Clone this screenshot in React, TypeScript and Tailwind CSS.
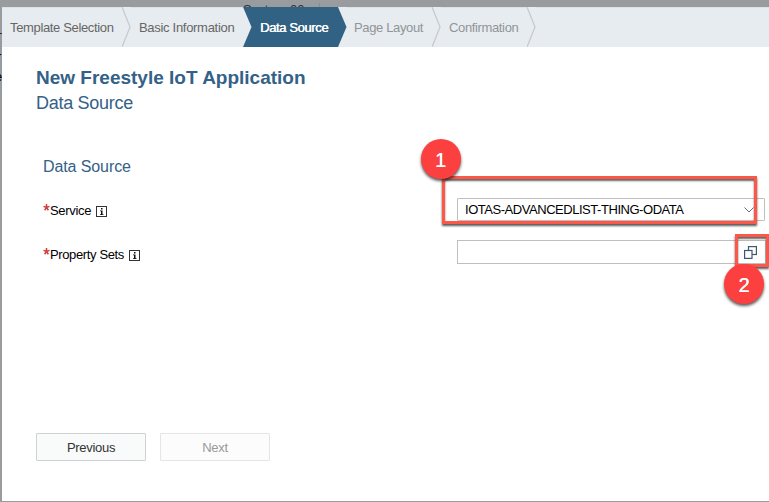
import type { ReactNode } from "react";

function Chevron({ left, right, line }: { left: string; right: string; line?: boolean }) {
  return (
    <svg width="9" height="40" viewBox="0 0 9 40" className="shrink-0">
      <rect width="9" height="40" fill={right} />
      <path d="M0 0L8.5 20L0 40Z" fill={left} />
      {line && <path d="M0 0L8 20L0 40" fill="none" stroke="#c6cbd0" strokeWidth="1.3" />}
    </svg>
  );
}

function Step({ className, children }: { className: string; children: ReactNode }) {
  return (
    <div className={`flex h-10 shrink-0 items-center pt-px text-[13px] whitespace-nowrap ${className}`}>
      {children}
    </div>
  );
}

function InfoIcon() {
  return (
    <svg width="11" height="11" viewBox="0 0 11 11" className="mt-px shrink-0">
      <rect x="0.5" y="0.5" width="10" height="10" fill="#fff" stroke="#333" />
      <path d="M5 2h1.5v1.5H5zM4 4.5h2.5v3.7h1V9H4v-.8h1V5.300H4z" fill="#111" />
    </svg>
  );
}

function Label({ text, spacing }: { text: string; spacing: string }) {
  return (
    <div className="flex w-[414px] shrink-0 items-center pt-px text-[13px] text-black">
      <svg width="7" height="16" viewBox="0 0 7 16" className="shrink-0">
        <path
          d="M3.500 1V4.500M.5 3.400L3.500 4.500L6.500 3.400M1.600 7.200L3.500 4.500L5.400 7.200"
          stroke="#cc3f3b"
          strokeWidth="1.500"
          fill="none"
        />
      </svg>
      <span className={`mr-[5px] ${spacing}`}>{text}</span>
      <InfoIcon />
    </div>
  );
}

function Badge({ value, className }: { value: string; className: string }) {
  return (
    <div
      className={`absolute flex size-10 items-center justify-center rounded-full bg-[#fc4040] pt-px text-[20px] font-normal text-white shadow-[0_2px_3px_rgba(0,0,0,0.65)] [text-shadow:0.4px_0_0_white] ${className}`}
    >
      {value}
    </div>
  );
}

export default function App() {
  return (
    <div className="relative h-[502px] w-[769px] overflow-hidden bg-[#989c9e] pt-[7px] pb-px pl-[2px] font-['Liberation_Sans',Arial,sans-serif]">
      <div className="absolute top-[3px] left-[243px] flex h-1 w-[77px] overflow-hidden border-r border-[#898d8f] text-[13px] leading-[13px] text-[#333]">
        System 00
      </div>
      <div className="absolute top-[33px] left-0 h-px w-[2px] bg-[#333]" />
      <div className="absolute top-[50px] -left-[3px] w-[5px] overflow-hidden text-[13px] leading-[13px] text-black">
        r
      </div>
      <div className="absolute top-[70px] -left-[5px] w-[7px] overflow-hidden text-[13px] leading-[14px] text-black">
        e
      </div>

      <main className="flex h-[494px] flex-col bg-white">
        <nav className="flex h-10 shrink-0 bg-[#e7ecf0] shadow-[inset_0_1px_0_#dce1e4]">
          <Step className="w-[120px] pl-2 tracking-[-0.35px] text-[#666]">Template Selection</Step>
          <Chevron left="#e7ecf0" right="#e7ecf0" line />
          <Step className="w-[112px] pl-2 tracking-[-0.3px] text-[#666]">Basic Information</Step>
          <Chevron left="#e7ecf0" right="#326283" />
          <Step className="w-[86px] bg-[#326283] pl-2 tracking-[-0.38px] text-white [text-shadow:0.4px_0_0_white]">
            Data Source
          </Step>
          <Chevron left="#326283" right="#e7ecf0" />
          <Step className="w-[85px] pl-[7px] tracking-[-0.36px] text-[#919598]">Page Layout</Step>
          <Chevron left="#e7ecf0" right="#e7ecf0" line />
          <Step className="w-[86px] pl-2 tracking-[-0.36px] text-[#919598]">Confirmation</Step>
          <Chevron left="#e7ecf0" right="#e7ecf0" line />
        </nav>

        <header className="h-[103px] shrink-0 pt-[18px] pl-[34px] text-[#346187]">
          <h1 className="text-[19px] leading-[25px] font-bold">New Freestyle IoT Application</h1>
          <h2 className="pt-px text-[18px] leading-[25px] tracking-[-0.28px]">Data Source</h2>
        </header>

        <section className="shrink-0 pl-[41px]">
          <h3 className="h-[48px] pt-[6px] text-[16px] leading-[22px] tracking-[-0.1px] text-[#346187]">
            Data Source
          </h3>
          <div className="flex h-6 items-start">
            <div className="pt-[2px]">
              <Label text="Service" spacing="tracking-[-0.32px]" />
            </div>
            <div className="flex h-[23px] w-[308px] items-center justify-between rounded-[1px] border border-[#bfbfbf] pt-px pr-[10px] pl-[7px] text-[13px] text-black">
              <span className="tracking-[-0.46px]">IOTAS-ADVANCEDLIST-THING-ODATA</span>
              <svg width="10" height="6" viewBox="0 0 10 6" fill="none" stroke="#65717b">
                <path d="M.5.5L5 5L9.500.5" />
              </svg>
            </div>
          </div>
          <div className="mt-[18px] flex h-6 items-center">
            <div className="pt-1">
              <Label text="Property Sets" spacing="tracking-[-0.37px]" />
            </div>
            <div className="flex h-6 w-[309px] items-center justify-end border border-[#bfbfbf] pr-2">
              <svg width="13" height="13" viewBox="0 0 13 13" fill="#fff" stroke="#3f5872" strokeWidth="1.2">
                <rect x="4.5" y="0.6" width="7.9" height="7.9" />
                <rect x="0.6" y="4.5" width="7.4" height="7.900" />
              </svg>
            </div>
          </div>
        </section>

        <footer className="mt-auto flex gap-[14px] pb-[40px] pl-[34px] text-[13px] tracking-[-0.3px]">
          <button className="h-7 w-[110px] rounded-[1px] border border-[#ced2d4] bg-[#f9fbfb] pt-px text-[#333]">
            Previous
          </button>
          <button disabled className="h-7 w-[110px] rounded-[1px] border border-[#e5e5e5] bg-[#fcfcfc] pt-px text-[#999]">
            Next
          </button>
        </footer>
      </main>

      <div className="absolute top-[176px] left-[442px] h-[48px] w-[315px] border-[3px] border-[#fc5749] shadow-[0_2px_2px_rgba(0,0,0,0.65),inset_0_2px_2px_rgba(0,0,0,0.6)]" />
      <div className="absolute top-[234px] left-[735px] h-[33px] w-[34px] border-[3px] border-[#fc5749] shadow-[0_2px_2px_rgba(0,0,0,0.65),inset_0_2px_2px_rgba(0,0,0,0.6)]" />
      <Badge value="1" className="top-[139px] left-[420.500px]" />
      <Badge value="2" className="top-[264px] left-[724px]" />
    </div>
  );
}
